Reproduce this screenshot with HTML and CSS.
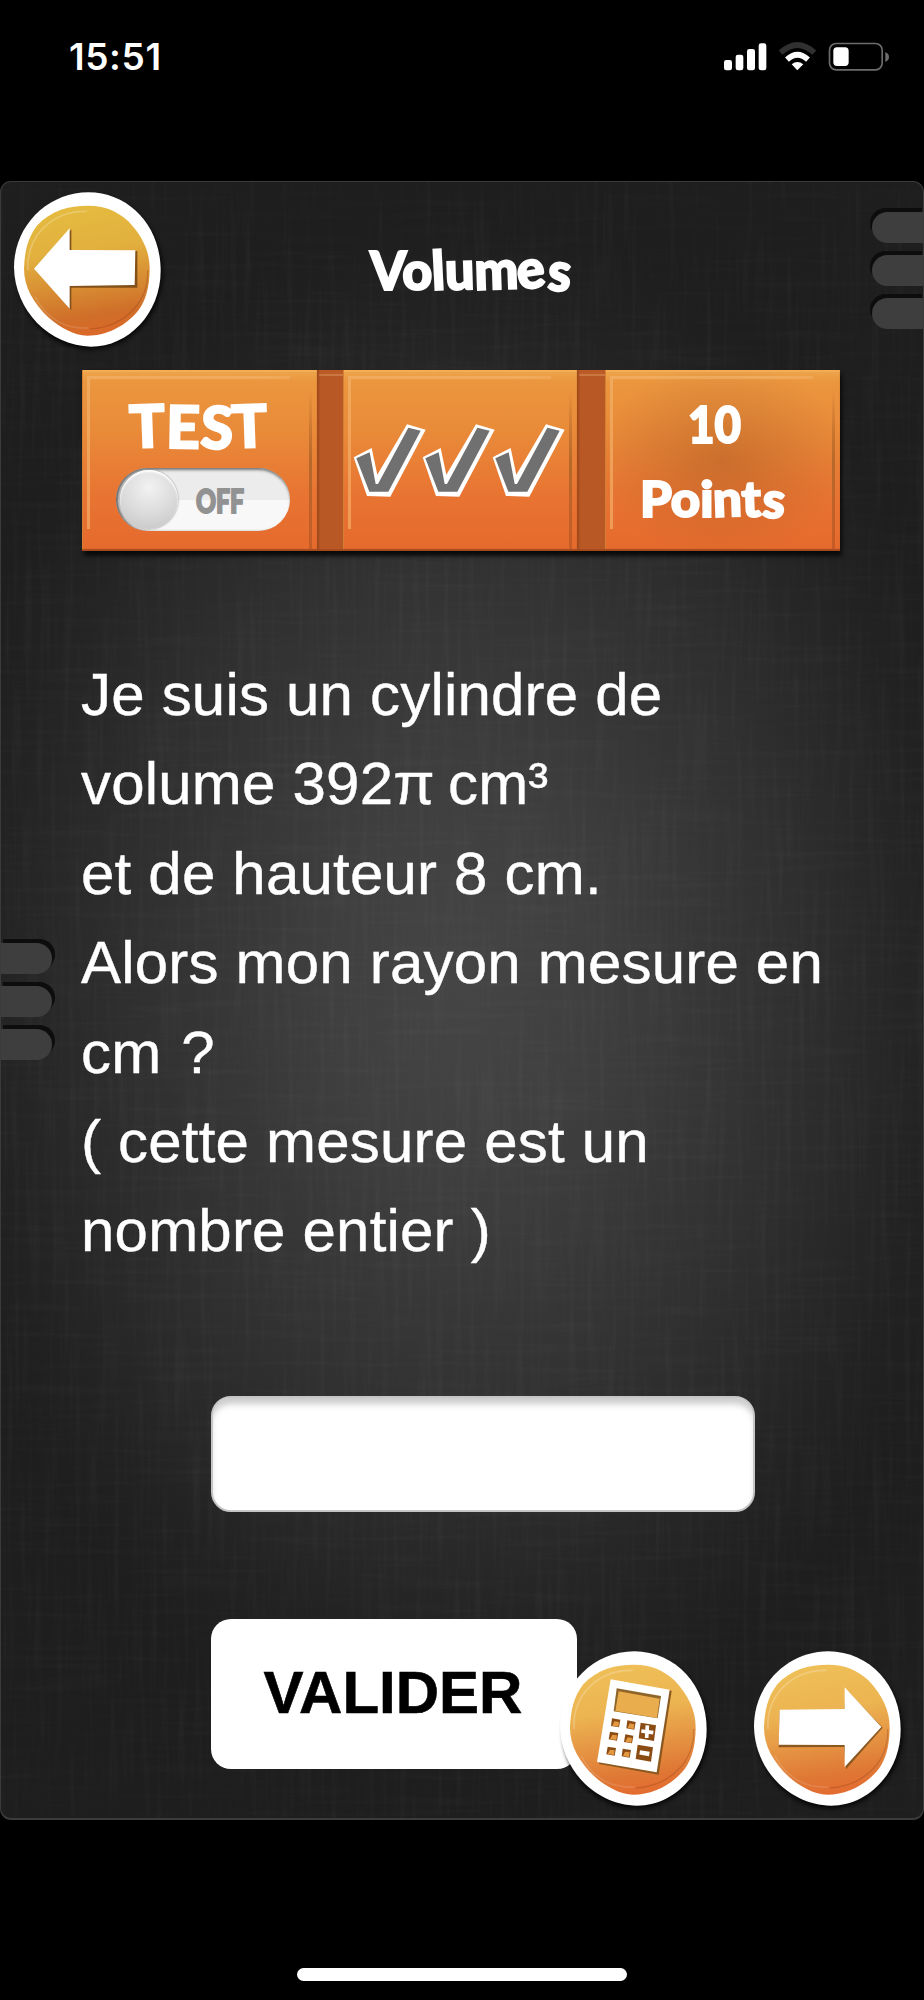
FILE: index.html
```html
<!DOCTYPE html>
<html lang="fr">
<head>
<meta charset="utf-8">
<title>Volumes</title>
<link rel="stylesheet" href="styles.css">
</head>
<body>
<svg class="defs" width="0" height="0" aria-hidden="true">
  <defs>
    <linearGradient id="gold" x1=".4" y1="0" x2=".55" y2="1">
      <stop offset="0" stop-color="#e5bb3f"/><stop offset=".35" stop-color="#e2b03e"/><stop offset=".85" stop-color="#cf6e29"/><stop offset="1" stop-color="#dc6829"/>
    </linearGradient>
    <linearGradient id="amber" x1=".4" y1="0" x2=".55" y2="1">
      <stop offset="0" stop-color="#efbf57"/><stop offset=".35" stop-color="#ecb452"/><stop offset=".85" stop-color="#df7735"/><stop offset="1" stop-color="#e36c30"/>
    </linearGradient>
    <filter id="soft" x="-20%" y="-20%" width="140%" height="140%"><feGaussianBlur stdDeviation="6"/></filter>
    <symbol id="rim" viewBox="30 54 480 501">
      <ellipse cx="270" cy="308" rx="219" ry="231" fill="#000" opacity=".75" filter="url(#soft)"/>
      <path d="M265 67C390 68 482 170 482 302C482 430 385 530 273 530C150 528 44 424 42 292C42 165 145 67 265 67Z" fill="#fff"/>
    </symbol>
    <symbol id="gloss" viewBox="30 54 480 501">
      <path d="M84 300C78 200 155 122 260 124" fill="none" stroke="#fff" stroke-opacity=".22" stroke-width="5"/>
      <path d="M443 300C447 395 375 470 270 477" fill="none" stroke="#8b3c14" stroke-opacity=".3" stroke-width="4"/>
      <path d="M105 380C140 450 200 478 265 474" fill="none" stroke="#fff" stroke-opacity=".12" stroke-width="5"/>
    </symbol>
    <symbol id="disc" viewBox="30 54 480 501">
      <path d="M265 107C315 107 352 124 385 154C428 200 450 245 449 302C447 350 440 385 416 420C378 468 320 497 262 497C222 497 180 472 148 445C100 400 72 350 72 296C74 245 82 205 112 166C152 122 205 107 265 107Z"/>
    </symbol>
    <symbol id="check" viewBox="0 0 228 228">
      <path d="M8 103L62 75L79 155L168 4L224 20L118 221L48 219Z" fill="#fff"/>
      <path d="M16 106L56 88L74 183L81 183L172 14L209 23L112 206L55 206Z" fill="#707070"/>
    </symbol>
  </defs>
</svg>

<div class="phone">
  <header class="status">
    <span class="time">15:51</span>
    <svg class="signals" viewBox="0 0 660 240">
      <g fill="#fff">
        <rect x="102" y="120" width="24" height="31" rx="7"/><rect x="137" y="104" width="23" height="47" rx="7"/>
        <rect x="171" y="87" width="24" height="64" rx="7"/><rect x="206" y="70" width="23" height="81" rx="7"/>
        <path d="M322 151L305 133Q322 119 340 133Z"/>
      </g>
      <path d="M291 119Q322 90 354 119" fill="none" stroke="#fff" stroke-width="17"/>
      <path d="M272 98Q322 52 373 98" fill="none" stroke="#303030" stroke-width="17"/>
      <rect x="418.500" y="70.500" width="158" height="79" rx="20" fill="none" stroke="#6c6c6c" stroke-width="5"/>
      <rect x="430" y="82" width="46" height="56" rx="11" fill="#fff"/>
      <path d="M586 96Q597 101 597 111Q597 121 586 126Z" fill="#6c6c6c"/>
    </svg>
  </header>

  <main class="panel">
    <svg class="texture" viewBox="0 0 924 1638" preserveAspectRatio="none" aria-hidden="true">
      <filter id="warp" x="0" y="0" width="100%" height="100%">
        <feTurbulence type="fractalNoise" baseFrequency=".16 .008" numOctaves="3" seed="4"/>
        <feColorMatrix values="0 0 0 0 1  0 0 0 0 1  0 0 0 0 1  1.6 0 0 0 -.72"/>
      </filter>
      <filter id="weft" x="0" y="0" width="100%" height="100%">
        <feTurbulence type="fractalNoise" baseFrequency=".008 .16" numOctaves="3" seed="9"/>
        <feColorMatrix values="0 0 0 0 1  0 0 0 0 1  0 0 0 0 1  1.6 0 0 0 -.72"/>
      </filter>
      <rect width="924" height="1638" filter="url(#warp)" opacity=".035"/>
      <rect width="924" height="1638" filter="url(#weft)" opacity=".025"/>
    </svg>

    <div class="tabs tabs-right"><i></i><i></i><i></i></div>
    <div class="tabs tabs-left"><i></i><i></i><i></i></div>

    <div class="topbar">
      <svg class="round" viewBox="30 54 480 501" role="img" aria-label="Retour">
        <use href="#rim" x="30" y="54" width="480" height="501"/>
        <use href="#disc" x="30" y="54" width="480" height="501" fill="url(#gold)"/>
        <use href="#gloss" x="30" y="54" width="480" height="501"/>
        <path d="M107 300L214 178V243L412 243V353L214 353V421Z" fill="#835018"/>
        <path d="M102 296L209 175V240L406 241L404 345L209 348V416Z" fill="#fff"/>
      </svg>
      <svg class="title" viewBox="0 -16 230 90">
        <text class="toon" x="2" y="46" font-size="54" textLength="200" lengthAdjust="spacingAndGlyphs" rotate="0 0 -3 -2 -2 -8 4">Volumes</text>
      </svg>
    </div>

    <section class="strip">
      <div class="card">
        <svg class="word-test" viewBox="0 -14 170 80">
          <text class="toon" x="5" y="46" font-size="59" textLength="138" lengthAdjust="spacingAndGlyphs" rotate="-2 1 3 -2">TEST</text>
        </svg>
        <div class="toggle"><span class="knob"></span>
          <svg class="word-off" viewBox="0 -8 60 44"><text x="1" y="25" font-size="32" textLength="48" lengthAdjust="spacingAndGlyphs">OFF</text></svg>
        </div>
      </div>
      <div class="joint"></div>
      <div class="card checks">
        <svg viewBox="0 0 228 228"><use href="#check" width="228" height="228"/></svg>
        <svg viewBox="0 0 228 228"><use href="#check" width="228" height="228"/></svg>
        <svg viewBox="0 0 228 228"><use href="#check" width="228" height="228"/></svg>
      </div>
      <div class="joint joint-wide"></div>
      <div class="card score">
        <svg viewBox="0 0 234 181">
          <text class="toon" x="83" y="73" font-size="51" textLength="53" lengthAdjust="spacingAndGlyphs">10</text>
          <text class="toon" x="35" y="147" font-size="50" textLength="144" lengthAdjust="spacingAndGlyphs" rotate="0 0 0 -2 -2 4">Points</text>
        </svg>
      </div>
    </section>

    <p class="question">Je suis un cylindre de<br>volume 392<span class="pi">π</span> cm³<br>et de hauteur 8 cm.<br>Alors mon rayon mesure en<br>cm <span class="mark">?</span><br>( cette mesure est un<br>nombre entier )</p>

    <div class="form">
      <input class="answer" type="text" aria-label="Réponse">
      <button class="submit">VALIDER</button>
    </div>

    <div class="floating">
      <svg class="round" viewBox="30 54 480 501" role="img" aria-label="Calculatrice">
        <use href="#rim" x="30" y="54" width="480" height="501"/>
        <use href="#disc" x="30" y="54" width="480" height="501" fill="url(#amber)"/>
        <use href="#gloss" x="30" y="54" width="480" height="501"/>
        <g transform="translate(-20 4)">
          <path d="M219 153L397 181L358 433L179 401Z" fill="#8b581f"/>
          <path d="M214 147L391 178L352 426L173 395Z" fill="#fff"/>
          <path d="M232 174L365 197L355 264L223 243Z" fill="#8f6529"/>
          <path d="M238 183L361 205L353 263L228 242Z" fill="#eaad4d"/>
          <g fill="#8b4c13">
            <path d="M218 264L243 268L239 291L215 287ZM264 270L289 275L285 298L261 294ZM212 304L237 308L233 331L208 327ZM258 312L282 316L278 339L254 335ZM205 349L230 353L226 376L201 372ZM250 355L275 359L271 382L247 378Z"/>
            <path d="M304 277L350 285L344 332L298 324ZM295 343L341 351L335 394L289 386Z"/>
          </g>
          <g fill="#e29942">
            <path d="M225 273L239 275L237 289L219 286ZM271 279L285 282L283 296L265 293ZM219 313L233 315L231 329L212 326ZM265 321L278 323L276 337L258 334ZM212 358L226 360L224 374L205 371ZM257 364L271 366L269 380L251 377Z"/>
          </g>
          <path d="M324 285L322 323M306 302L342 307" stroke="#fff" stroke-width="11"/>
          <path d="M301 366L330 371" stroke="#fff" stroke-width="13"/>
        </g>
      </svg>
      <svg class="round" viewBox="30 54 480 501" role="img" aria-label="Suivant">
        <use href="#rim" x="30" y="54" width="480" height="501"/>
        <use href="#disc" x="30" y="54" width="480" height="501" fill="url(#amber)"/>
        <use href="#gloss" x="30" y="54" width="480" height="501"/>
        <path d="M119 246L314 242L316 179L428 296L318 421L312 354L116 355Z" fill="#8b581f"/>
        <path d="M119 242L314 240V175L424 294L314 414V348L116 347Z" fill="#fff"/>
      </svg>
    </div>
  </main>

  <footer class="home"><span></span></footer>
</div>
</body>
</html>
```

FILE: styles.css
```css
* { box-sizing: border-box; }
body { margin: 0; background: #000; font-family: "Liberation Sans", Arial, sans-serif; }
.defs { position: absolute; }
.phone { width: 924px; height: 2000px; display: flex; flex-direction: column; background: #000; overflow: hidden; }
svg { display: block; flex: none; }

.status { height: 181px; flex: none; display: flex; justify-content: space-between; align-items: flex-start; padding: 20px 14px 0 69px; color: #fff; }
.time { font: 600 37px/44px Inter, sans-serif; margin-top: 15px; letter-spacing: .6px; }
.signals { width: 220px; height: 80px; }

.panel {
  position: relative; height: 1639px; flex: none; display: flex; flex-direction: column;
  border: solid #3b3b3b; border-width: 1px 1px 2px; border-radius: 11px; overflow: hidden;
  background: radial-gradient(ellipse 540px 760px at 50% 49%, #454545 0%, #3f3f3f 25%, #2f2f2f 62%, #222 88%, #1e1e1e 100%);
}
.texture { position: absolute; inset: 0; width: 100%; height: 100%; }

.tabs { position: absolute; display: flex; flex-direction: column; gap: 12px; }
.tabs i { width: 52px; height: 31px; background: #3e3e3e; }
.tabs-right { right: -1px; top: 30px; }
.tabs-right i { border-radius: 16px 0 0 16px; box-shadow: -2px -4px 0 #0d0d0d; }
.tabs-left { left: -1px; top: 761px; }
.tabs-left i { border-radius: 0 16px 16px 0; box-shadow: 3px -4px 0 #0d0d0d; }

.topbar { position: relative; display: flex; align-items: flex-start; gap: 198px; padding: 6px 0 0 9px; height: 188px; }
.round { width: 160px; height: 167px; }
.title { width: 230px; height: 90px; margin-top: 40px; }
.toon, .word-off text { font-family: Lato, "Open Sans", sans-serif; font-weight: 900; }
.toon { fill: #fff; stroke: #fff; stroke-width: 2px; stroke-linejoin: miter; }

.strip { position: relative; display: flex; width: 758px; height: 181px; margin-left: 81px; box-shadow: 2px 5px 4px #0b0b0b; }
.card {
  width: 235px; height: 181px; padding-top: 18px;
  background: linear-gradient(#eda64c 0, #eb963f 12px, #e98b39 60px, #e87432 125px, #e56a2d 100%);
  box-shadow: inset 0 -2px 1px #a34b1e, inset 1px 0 0 #d98537, inset 0 7px 0 -5px #f3ad55;
  position: relative;
}
.card::before { content: ""; position: absolute; left: 5px; top: 6px; width: 200px; height: 150px; border: solid #f4b46d; border-width: 3px 0 0 3px; opacity: .65; -webkit-mask: linear-gradient(135deg, #000 45%, transparent 85%); mask: linear-gradient(135deg, #000 45%, transparent 85%); }
.card::after { content: ""; position: absolute; right: 5px; top: 20px; bottom: 2px; width: 3px; background: linear-gradient(transparent, #b6692b 45%, #c65b27); }
.joint { width: 26px; height: 181px; background: linear-gradient(#bd5b27 4px, #c97844 4px, #c97844 6px, #b85825 6px); box-shadow: inset 3px 0 2px -1px #a04a1c, inset 0 -2px #a84a1c; }
.joint-wide { width: 28px; }
.word-test { width: 170px; height: 80px; margin-left: 43px; }
.toggle { position: relative; width: 174px; height: 63px; margin: 0 0 0 34px; border-radius: 32px; background: linear-gradient(#ececec 0 50%, #f8f8f8 51%); box-shadow: inset 0 3px 3px -1px #777, inset 3px 0 3px -1px #555; display: flex; align-items: center; gap: 17px; padding-left: 4px; }
.knob { width: 58px; height: 59px; border-radius: 50%; background: radial-gradient(circle at 50% 30%, #f2f2f2, #dcdcdc 50%, #c2c2c2); box-shadow: 0 0 2px #777, inset 0 2px 2px #fff; }
.word-off { width: 60px; height: 44px; margin-top: 5px; }
.word-off text { fill: #929292; stroke: #929292; stroke-width: 2px; }
.checks { display: flex; padding: 53px 0 0 8px; }
.checks svg { width: 76px; height: 76px; margin-right: -6.300px; position: relative; }
.score { padding: 0; background: radial-gradient(ellipse 125px 100px at 50% 50%, #a85a2477, transparent), linear-gradient(#eda64c 0, #eb963f 12px, #e98b39 60px, #e87432 125px, #e56a2d 100%); }
.score svg { width: 234px; height: 181px; position: relative; }

.question { position: relative; margin: 99px 0 0 80px; font-size: 60px; line-height: 89.400px; letter-spacing: .2px; color: #fff; white-space: nowrap; -webkit-text-stroke: .4px #fff; }
.pi { letter-spacing: -3.500px; }
.mark { padding-left: 3px; }
.form { position: relative; display: flex; flex-direction: column; align-items: flex-start; margin: 120px 0 0 210px; }
.answer { width: 544px; height: 116px; padding: 0 24px; border: 2px solid #c6c6c6; border-radius: 20px; background: #fff; box-shadow: inset 0 8px 6px -2px #ccc; font: 60px "Liberation Sans", Arial, sans-serif; }
.submit { width: 366px; height: 150px; margin-top: 107px; padding: 0 2px 2px 0; border: 0; border-radius: 20px; background: #fff; color: #000; font: bold 60px "Liberation Sans", Arial, sans-serif; -webkit-text-stroke: .6px #000; }
.floating { position: absolute; left: 555px; top: 1465px; display: flex; gap: 34px; }

.home { flex: 1; display: flex; justify-content: center; align-items: flex-end; padding-bottom: 19px; }
.home span { width: 330px; height: 13px; border-radius: 7px; background: #fff; }
```
